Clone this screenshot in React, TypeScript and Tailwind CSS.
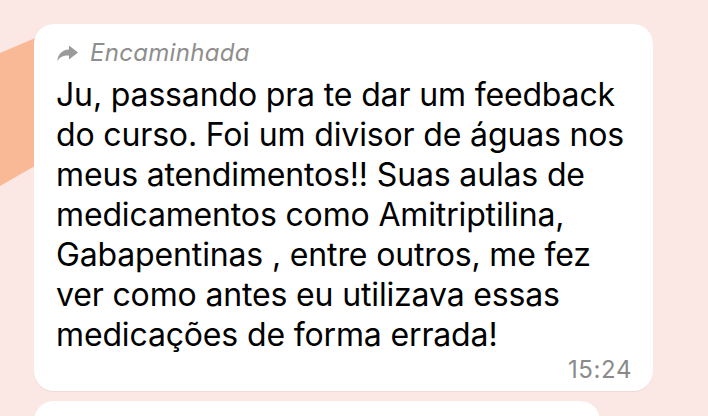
const lines = [
  'Ju, passando pra te dar um feedback',
  'do curso. Foi um divisor de águas nos',
  'meus atendimentos!! Suas aulas de',
  'medicamentos como Amitriptilina,',
  'Gabapentinas , entre outros, me fez',
  'ver como antes eu utilizava essas',
  'medicações de forma errada!',
];

const ForwardIcon = () => (
  <svg width="23" height="17" viewBox="0 0 22 17" className="shrink-0">
    <path
      d="M12.5 0.5 L21.5 7.5 L12.5 14.5 L12.5 10.5 C7 10.3 3.5 12 0.8 16 C1.5 9.5 5 5 12.5 4.5 Z"
      fill="#9a9a9a"
    />
  </svg>
);

export default function App() {
  return (
    <div
      className="relative w-[708px] h-[416px] overflow-hidden bg-[#fbe8e5]"
      style={{ fontFamily: 'Inter, "Liberation Sans", sans-serif' }}
    >
      {/* peach sticker behind the bubble */}
      <svg
        className="absolute left-0 top-0"
        width="60"
        height="220"
        viewBox="0 0 60 220"
      >
        <polygon points="0,53 40,36 40,163 0,186" fill="#f9b997" />
      </svg>

      <div className="relative flex flex-col gap-[10px] pl-[34px] pt-[24px]">
        <div className="w-[619px] rounded-[20px] bg-white shadow-[0_1px_1px_rgba(0,0,0,0.06)] pl-[22px] pr-[21px] pt-[15px] pb-[7px]">
          <div className="flex items-center gap-[11px] h-[28px] text-[24px] italic text-[#8e8e8e] tracking-[0.3px]">
            <ForwardIcon />
            <span>Encaminhada</span>
          </div>
          <div className="flex flex-col mt-[8px]">
            <p className="text-[32px] leading-[40px] text-black tracking-[-0.15px]">
              {lines.map((l, i) => (
                <span key={i} className="block whitespace-nowrap">
                  {l}
                </span>
              ))}
            </p>
            <span className="self-end text-[24px] text-[#8a8a8a] leading-[28px] tracking-[0.6px] mt-[1px]">
              15:24
            </span>
          </div>
        </div>
        <div className="w-[566px] h-[60px] rounded-[20px] bg-white" />
      </div>
    </div>
  );
}
